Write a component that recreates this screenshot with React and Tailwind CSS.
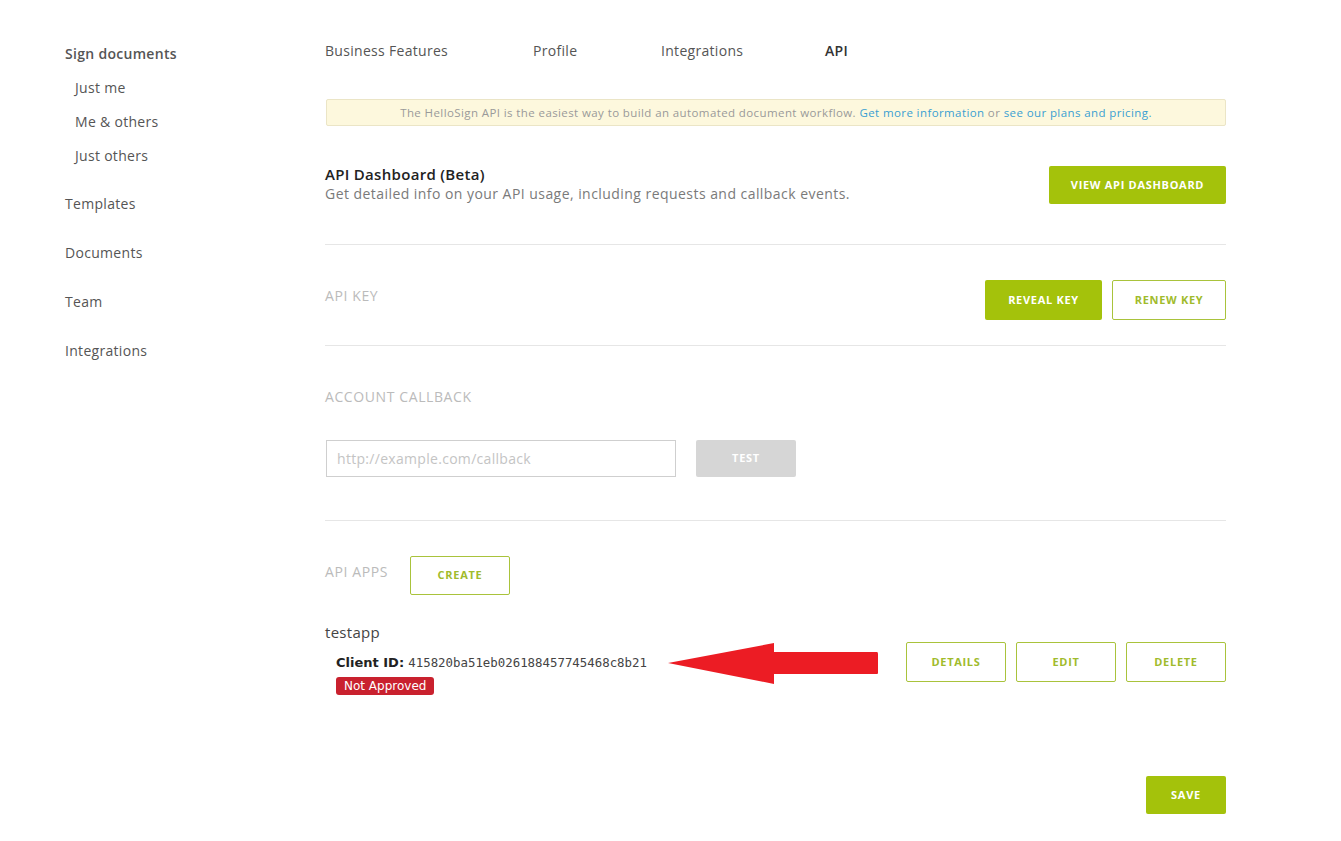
import { useState } from 'react'

const font = { fontFamily: '"Open Sans", "Liberation Sans", sans-serif' }

const SideLink = ({ children, sub, bold }) => (
  <a
    href="#"
    className={`block leading-[20px] text-[14px] tracking-[0.3px] text-[#555] ${sub ? 'pl-[10px]' : ''} ${bold ? 'font-semibold text-[#444]' : ''}`}
  >
    {children}
  </a>
)

const GreenButton = ({ children, className = '' }) => (
  <button
    type="button"
    className={`flex items-center justify-center rounded-[2px] bg-[#a4c20b] text-[11px] font-bold tracking-[0.7px] text-white ${className}`}
  >
    {children}
  </button>
)

const OutlineButton = ({ children, className = '' }) => (
  <button
    type="button"
    className={`flex items-center justify-center rounded-[2px] border border-[#a9c33b] bg-white text-[11px] font-bold tracking-[0.7px] text-[#a0bb2c] ${className}`}
  >
    {children}
  </button>
)

const Arrow = () => (
  <svg width="212" height="42" viewBox="0 0 212 42" className="block">
    <path d="M1 20 L107 0 L107 9 L210 9 Q211 9 211 11 L211 30 Q211 31 210 31 L107 31 L107 41 Z" fill="#ec1c24" />
  </svg>
)

export default function App() {
  const [callback, setCallback] = useState('')

  return (
    <div className="min-h-screen bg-white" style={font}>
      <div className="flex pl-[65px] pt-[41px]">
        <aside className="w-[260px] shrink-0 pt-[3px]">
          <SideLink bold>Sign documents</SideLink>
          <div className="mt-[14px] flex flex-col gap-[14px]">
            <SideLink sub>Just me</SideLink>
            <SideLink sub>Me &amp; others</SideLink>
            <SideLink sub>Just others</SideLink>
          </div>
          <div className="mt-[28px] flex flex-col gap-[29px]">
            <SideLink>Templates</SideLink>
            <SideLink>Documents</SideLink>
            <SideLink>Team</SideLink>
            <SideLink>Integrations</SideLink>
          </div>
        </aside>

        <main className="w-[901px]">
          <nav className="flex h-[20px] items-center text-[14px] leading-[20px] tracking-[0.3px] text-[#555]">
            <a href="#" className="w-[208px]">Business Features</a>
            <a href="#" className="w-[128px]">Profile</a>
            <a href="#" className="w-[164px]">Integrations</a>
            <a href="#" className="font-semibold text-[#333]">API</a>
          </nav>

          <div className="mt-[38px] ml-px flex h-[27px] items-center justify-center rounded-[2px] border border-[#ebe5c6] bg-[#fdf8dd] text-[11.5px] tracking-[0.4px] text-[#9a9a9a]">
            <span>
              The HelloSign API is the easiest way to build an automated document workflow.{' '}
              <a href="#" className="text-[#3a9fd2]">Get more information</a> or{' '}
              <a href="#" className="text-[#3a9fd2]">see our plans and pricing.</a>
            </span>
          </div>

          <section className="mt-[38px] flex items-start justify-between border-b border-[#e6e6e6] pb-[40px]">
            <div>
              <h2 className="text-[15px] font-semibold leading-[20px] tracking-[0.3px] text-[#222]">API Dashboard (Beta)</h2>
              <p className="text-[14px] leading-[20px] tracking-[0.45px] text-[#7a7a7a]">
                Get detailed info on your API usage, including requests and callback events.
              </p>
            </div>
            <GreenButton className="mt-[2px] h-[38px] w-[177px]">VIEW API DASHBOARD</GreenButton>
          </section>

          <section className="flex items-start justify-between border-b border-[#e6e6e6] pt-[35px] pb-[25px]">
            <h3 className="pt-[6px] text-[14px] leading-[20px] tracking-[0.6px] text-[#bbb]">API KEY</h3>
            <div className="flex gap-[10px]">
              <GreenButton className="h-[40px] w-[117px]">REVEAL KEY</GreenButton>
              <OutlineButton className="h-[40px] w-[114px]">RENEW KEY</OutlineButton>
            </div>
          </section>

          <section className="border-b border-[#e6e6e6] pt-[41px] pb-[43px]">
            <h3 className="text-[14px] leading-[20px] tracking-[0.6px] text-[#bbb]">ACCOUNT CALLBACK</h3>
            <div className="mt-[33px] flex gap-[20px]">
              <input
                type="text"
                value={callback}
                onChange={(e) => setCallback(e.target.value)}
                placeholder="http://example.com/callback"
                className="ml-px h-[37px] w-[350px] border border-[#cfcfcf] px-[10px] text-[14px] tracking-[0.3px] text-[#555] placeholder-[#c4c4c4] outline-none"
              />
              <button
                type="button"
                className="h-[37px] w-[100px] rounded-[2px] bg-[#d6d6d6] text-[11px] font-bold tracking-[0.7px] text-white"
              >
                TEST
              </button>
            </div>
          </section>

          <section className="pt-[35px]">
            <div className="flex items-start">
              <h3 className="w-[85px] pt-[6px] text-[14px] leading-[20px] tracking-[0.6px] text-[#bbb]">API APPS</h3>
              <OutlineButton className="h-[39px] w-[100px]">CREATE</OutlineButton>
            </div>

            <div className="relative mt-[27px] flex items-start justify-between">
              <div>
                <div className="text-[15px] leading-[20px] tracking-[0.3px] text-[#444]">testapp</div>
                <div className="mt-[9px] pl-[11px] leading-[20px]">
                  <span className="text-[13px] font-bold text-[#222]" style={{ fontFamily: '"DejaVu Sans", sans-serif' }}>
                    Client ID:
                  </span>{' '}
                  <span className="text-[12.4px] text-[#444]" style={{ fontFamily: '"DejaVu Sans Mono", monospace' }}>
                    415820ba51eb026188457745468c8b21
                  </span>
                </div>
                <div className="mt-[4px] flex pl-[11px]">
                  <span
                    className="flex h-[18px] items-center rounded-[3px] bg-[#c9212e] px-[8px] text-[12px] text-white"
                    style={{ fontFamily: '"DejaVu Sans", sans-serif' }}
                  >
                    Not Approved
                  </span>
                </div>
              </div>

              <div className="absolute left-[342px] top-[21px]">
                <Arrow />
              </div>

              <div className="mt-[20px] flex gap-[10px]">
                <OutlineButton className="h-[40px] w-[100px]">DETAILS</OutlineButton>
                <OutlineButton className="h-[40px] w-[100px]">EDIT</OutlineButton>
                <OutlineButton className="h-[40px] w-[100px]">DELETE</OutlineButton>
              </div>
            </div>

            <div className="mt-[81px] flex justify-end pb-[27px]">
              <GreenButton className="h-[38px] w-[80px]">SAVE</GreenButton>
            </div>
          </section>
        </main>
      </div>
    </div>
  )
}
